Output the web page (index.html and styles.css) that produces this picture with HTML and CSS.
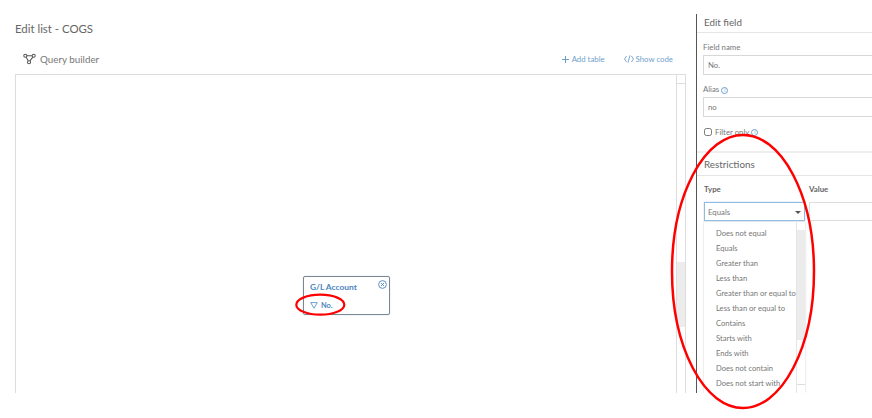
FILE: index.html
```html
<!DOCTYPE html>
<html lang="en">
<head>
  <meta charset="UTF-8">
  <title>Edit list - COGS</title>
  <link rel="stylesheet" href="styles.css">
</head>
<body>

<div class="page">
  <main class="editor">
    <h1>Edit list - COGS</h1>
    <div class="toolbar">
      <svg class="builder-icon" width="13" height="12" viewBox="0 0 14 12" fill="none" stroke="#555" stroke-width="1.1">
        <circle cx="2.5" cy="2.5" r="1.7"/>
        <circle cx="11.5" cy="2.5" r="1.7"/>
        <circle cx="6.5" cy="9.5" r="1.7"/>
        <path d="M4.2 2.5h5.6M3.4 4l2.3 4M10.6 4l-3.2 4"/>
      </svg>
      <span class="toolbar-title">Query builder</span>
      <a href="#" class="tool-link">
        <svg class="plus-icon" width="7" height="7" viewBox="0 0 7 7" fill="none" stroke="#6f9fcb"><path d="M3.5 0v7M0 3.5h7"/></svg>
        Add table
      </a>
      <a href="#" class="tool-link">
        <svg width="10" height="8" viewBox="0 0 10 8" fill="none" stroke="#6f9fcb" stroke-width=".9"><path d="M2.6 1L.5 4l2.1 3M7.4 1l2.1 3-2.1 3M6 .3L4 7.7"/></svg>
        Show code
      </a>
    </div>
    <div class="canvas">
      <div class="table-node">
        <div class="node-title">G/L Account</div>
        <svg class="node-close" width="9" height="9" viewBox="0 0 10 10" fill="none" stroke="#4a86c0">
          <circle cx="5" cy="5" r="4.3"/>
          <path d="M3.4 3.4l3.2 3.2M6.6 3.4l-3.2 3.2"/>
        </svg>
        <div class="node-field">
          <svg width="8" height="7" viewBox="0 0 8 7" fill="none" stroke="#4a86c0" stroke-width=".8"><path d="M.7.6h6.6L4 6.2z"/></svg>
          No.
        </div>
      </div>
      <div class="scrollbar">
        <div class="scroll-arrow"></div>
        <div class="scroll-thumb"></div>
      </div>
    </div>
  </main>

  <aside class="panel">
    <h2 class="panel-head">Edit field</h2>
    <div class="panel-body">
      <label class="field-label">Field name</label>
      <input class="text-input" type="text" value="No.">
      <label class="field-label">Alias <span class="info">i</span></label>
      <input class="text-input" type="text" value="no">
      <label class="check-row"><input type="checkbox"> Filter only <span class="info">i</span></label>
    </div>
    <h2 class="panel-head restrict-head">Restrictions</h2>
    <div class="restrict-grid">
      <div class="col-label">Type</div>
      <div class="col-label">Value</div>
      <div class="select-box">Equals<span class="caret"></span></div>
      <div class="value-box"></div>
    </div>
    <div class="dropdown">
      <ul class="options">
        <li>Does not equal</li>
        <li>Equals</li>
        <li>Greater than</li>
        <li>Less than</li>
        <li>Greater than or equal to</li>
        <li>Less than or equal to</li>
        <li>Contains</li>
        <li>Starts with</li>
        <li>Ends with</li>
        <li>Does not contain</li>
        <li>Does not start with</li>
      </ul>
      <div class="drop-scroll">
        <div class="drop-arrow"></div>
        <div class="drop-thumb"></div>
        <div class="drop-arrow drop-arrow-end"></div>
      </div>
    </div>
  </aside>
</div>

<svg class="marks" width="872" height="418" viewBox="0 0 872 418" fill="none" stroke="#f00">
  <ellipse cx="743" cy="271.5" rx="71" ry="136.5" stroke-width="2.5"/>
  <ellipse cx="320.3" cy="304.7" rx="24" ry="10" stroke-width="2.2"/>
</svg>

</body>
</html>
```

FILE: styles.css
```css
html, body {
  margin: 0;
  height: 418px;
  overflow: hidden;
  background: #fff;
}
body {
  font-family: "Lato", "Noto Sans", sans-serif;
  color: #777;
  font-size: 7.8px;
  position: relative;
}
.page {
  display: flex;
  height: 393px;
  overflow: hidden;
}
.editor {
  width: 696px;
  box-sizing: border-box;
  padding: 20px 10px 0 15px;
  display: flex;
  flex-direction: column;
}
h1 {
  margin: 0;
  font-size: 11.4px;
  font-weight: 400;
  line-height: 18px;
  color: #666;
}
.toolbar {
  display: flex;
  align-items: center;
  height: 22px;
  margin-top: 10px;
  padding: 0 13px 0 8px;
  gap: 4px;
}
.toolbar-title {
  font-size: 9.8px;
  color: #777;
  margin-right: auto;
}
.tool-link {
  display: flex;
  align-items: center;
  gap: 2px;
  color: #6f9fcb;
  text-decoration: none;
  margin-left: 15px;
}
.plus-icon {
  margin-right: 1px;
}
.canvas {
  flex: 1;
  position: relative;
  border: 1px solid #ddd;
  border-bottom: none;
  margin-top: 4px;
}
.scrollbar {
  position: absolute;
  top: 0;
  right: 0;
  bottom: 0;
  width: 8px;
  border-left: 1px solid #ddd;
  background: #fff;
}
.scroll-arrow {
  height: 8px;
  border-bottom: 1px solid #ddd;
}
.scroll-thumb {
  margin-top: 178px;
  height: 65px;
  background: #ececec;
}
.table-node {
  position: absolute;
  left: 287px;
  top: 201px;
  width: 85px;
  height: 37px;
  border: 1px solid #7a8796;
  border-radius: 2px;
  box-shadow: 0 0 1px #9aa;
  color: #4a86c0;
}
.node-title {
  font-size: 8.4px;
  font-weight: 700;
  margin: 4px 0 0 6px;
  line-height: 13px;
}
.node-close {
  position: absolute;
  top: 3px;
  right: 2px;
}
.node-field {
  font-size: 7.4px;
  font-weight: 700;
  margin: 7px 0 0 6px;
  display: flex;
  align-items: center;
  gap: 3px;
}
.panel {
  flex: 1;
  margin-top: 14px;
  border-left: 1px solid #555;
  position: relative;
  overflow: hidden;
}
.panel-head {
  margin: 0;
  padding-left: 7px;
  font-size: 9.8px;
  font-weight: 400;
  line-height: 16px;
  height: 18px;
  border-bottom: 1px solid #e6e6e6;
  color: #666;
}
.panel-body {
  padding: 8px 0 0 6px;
  height: 120px;
  box-sizing: border-box;
  border-bottom: 2px solid #eee;
}
.field-label {
  display: block;
  line-height: 12px;
  margin-bottom: 2px;
}
.text-input {
  display: block;
  width: 200px;
  height: 20px;
  box-sizing: border-box;
  border: 1px solid #d8d8d8;
  border-right: none;
  padding: 0 4px;
  font: inherit;
  color: #777;
  margin-bottom: 8px;
}
.info {
  display: inline-block;
  width: 5px;
  height: 5px;
  line-height: 5px;
  border: 1px solid #6f9fcb;
  border-radius: 50%;
  color: #6f9fcb;
  font-size: 5px;
  text-align: center;
}
.check-row {
  display: flex;
  align-items: center;
  gap: 2px;
  margin: 10px 0 0 1px;
}
.check-row input {
  margin: 0 1px 0 0;
  width: 8px;
  height: 8px;
}
.restrict-head {
  height: 22px;
  line-height: 22px;
}
.restrict-grid {
  display: grid;
  grid-template-columns: 101px 80px;
  column-gap: 4px;
  padding: 7px 0 0 7px;
}
.col-label {
  font-weight: 700;
  line-height: 12px;
  margin-bottom: 7px;
  color: #666;
}
.select-box {
  height: 19px;
  line-height: 18px;
  box-sizing: border-box;
  border: 1px solid #8fbbe3;
  box-shadow: 0 0 1px #8fbbe3;
  padding-left: 3px;
  position: relative;
}
.caret {
  position: absolute;
  right: 3px;
  top: 8px;
  border: 3px solid transparent;
  border-top-color: #555;
  border-bottom: none;
}
.value-box {
  height: 19px;
  box-sizing: border-box;
  border: 1px solid #ddd;
  border-right: none;
}
.dropdown {
  position: absolute;
  left: 7px;
  top: 208px;
  width: 101px;
  height: 171px;
  display: flex;
  background: #fff;
  box-shadow: 0 0 2px #ccc;
}
.options {
  list-style: none;
  margin: 0;
  padding: 4px 0 0 12px;
  flex: 1;
  min-width: 0;
  white-space: nowrap;
  font-size: 7.6px;
}
.options li {
  line-height: 15px;
  height: 15px;
}
.drop-scroll {
  width: 8px;
  flex: none;
  display: flex;
  flex-direction: column;
  border-left: 1px solid #e6e6e6;
}
.drop-arrow {
  height: 8px;
}
.drop-arrow-end {
  border-top: 1px solid #ddd;
}
.drop-thumb {
  height: 110px;
  margin-bottom: auto;
  background: #ececec;
}
.marks {
  position: absolute;
  left: 0;
  top: 0;
  pointer-events: none;
}
```
